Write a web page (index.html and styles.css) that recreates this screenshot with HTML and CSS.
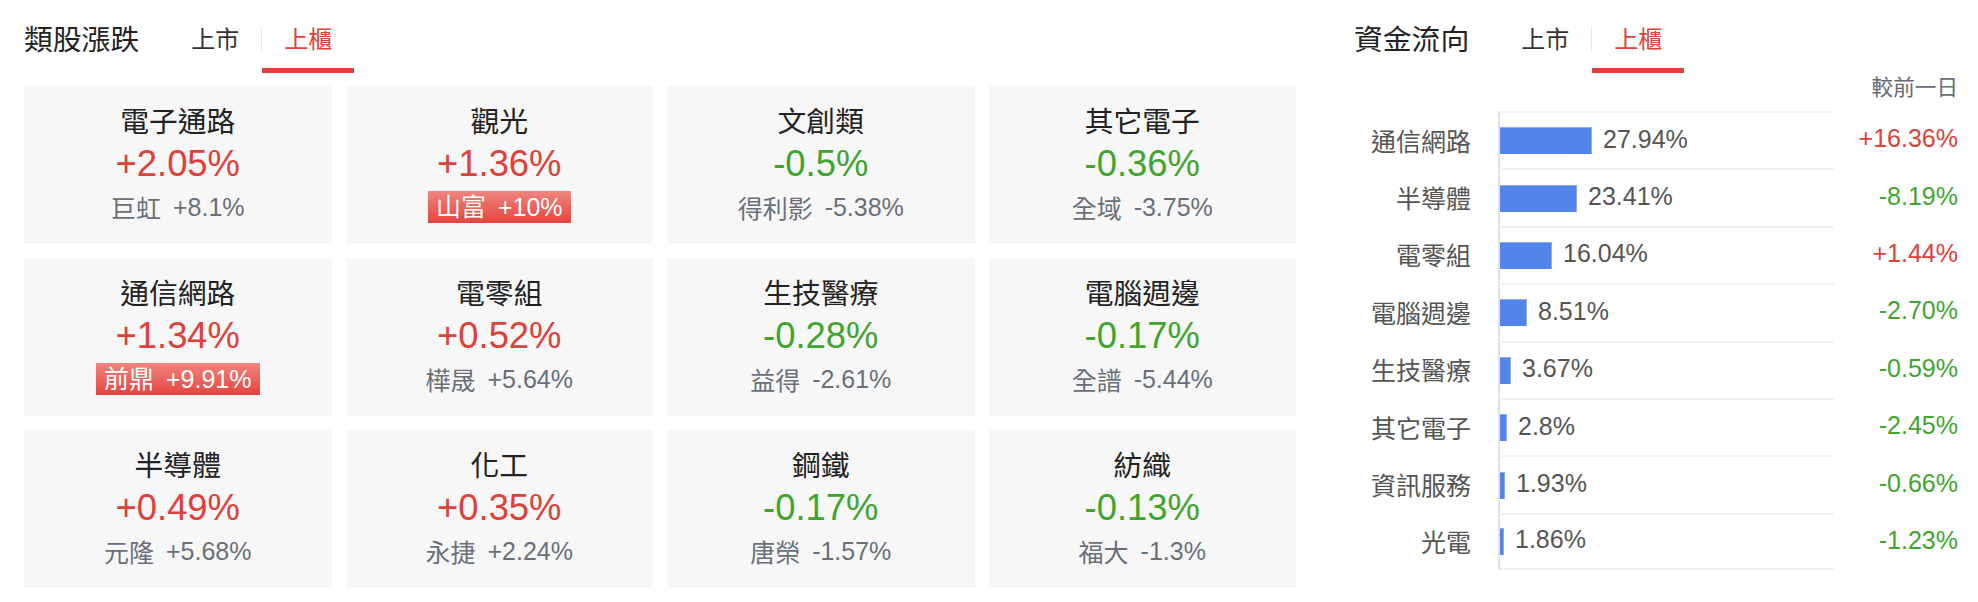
FILE: index.html
```html
<!DOCTYPE html>
<html>
<head>
	<meta charset="utf-8">
	<title>類股漲跌 / 資金流向</title>
	<link rel="stylesheet" href="styles.css">
</head>
<body>
	<div class="page">
		<div class="board">
			<div class="head">
				<h2 class="head_title">類股漲跌</h2>
				<span class="tab">上市</span>
				<span class="tab_sep"></span>
				<span class="tab active">上櫃</span>
			</div>
			<div class="grid">
				<div class="card">
					<div class="name">電子通路</div>
					<div class="pct up">+2.05%</div>
					<div class="lead"><span>巨虹</span><span class="num">+8.1%</span></div>
				</div>
				<div class="card">
					<div class="name">觀光</div>
					<div class="pct up">+1.36%</div>
					<div class="lead"><span class="limit">山富<span class="num">+10%</span></span></div>
				</div>
				<div class="card">
					<div class="name">文創類</div>
					<div class="pct down">-0.5%</div>
					<div class="lead"><span>得利影</span><span class="num">-5.38%</span></div>
				</div>
				<div class="card">
					<div class="name">其它電子</div>
					<div class="pct down">-0.36%</div>
					<div class="lead"><span>全域</span><span class="num">-3.75%</span></div>
				</div>
				<div class="card">
					<div class="name">通信網路</div>
					<div class="pct up">+1.34%</div>
					<div class="lead"><span class="limit">前鼎<span class="num">+9.91%</span></span></div>
				</div>
				<div class="card">
					<div class="name">電零組</div>
					<div class="pct up">+0.52%</div>
					<div class="lead"><span>樺晟</span><span class="num">+5.64%</span></div>
				</div>
				<div class="card">
					<div class="name">生技醫療</div>
					<div class="pct down">-0.28%</div>
					<div class="lead"><span>益得</span><span class="num">-2.61%</span></div>
				</div>
				<div class="card">
					<div class="name">電腦週邊</div>
					<div class="pct down">-0.17%</div>
					<div class="lead"><span>全譜</span><span class="num">-5.44%</span></div>
				</div>
				<div class="card">
					<div class="name">半導體</div>
					<div class="pct up">+0.49%</div>
					<div class="lead"><span>元隆</span><span class="num">+5.68%</span></div>
				</div>
				<div class="card">
					<div class="name">化工</div>
					<div class="pct up">+0.35%</div>
					<div class="lead"><span>永捷</span><span class="num">+2.24%</span></div>
				</div>
				<div class="card">
					<div class="name">鋼鐵</div>
					<div class="pct down">-0.17%</div>
					<div class="lead"><span>唐榮</span><span class="num">-1.57%</span></div>
				</div>
				<div class="card">
					<div class="name">紡織</div>
					<div class="pct down">-0.13%</div>
					<div class="lead"><span>福大</span><span class="num">-1.3%</span></div>
				</div>
			</div>
		</div>

		<div class="flow">
			<div class="head">
				<h2 class="head_title">資金流向</h2>
				<span class="tab">上市</span>
				<span class="tab_sep"></span>
				<span class="tab active">上櫃</span>
			</div>
			<div class="note">較前一日</div>
			<div class="chart">
				<div class="row">
					<div class="label">通信網路</div>
					<div class="track"><span class="bar" style="width:92px"></span><span class="share">27.94%</span></div>
					<div class="diff up">+16.36%</div>
				</div>
				<div class="row">
					<div class="label">半導體</div>
					<div class="track"><span class="bar" style="width:77px"></span><span class="share">23.41%</span></div>
					<div class="diff down">-8.19%</div>
				</div>
				<div class="row">
					<div class="label">電零組</div>
					<div class="track"><span class="bar" style="width:52px"></span><span class="share">16.04%</span></div>
					<div class="diff up">+1.44%</div>
				</div>
				<div class="row">
					<div class="label">電腦週邊</div>
					<div class="track"><span class="bar" style="width:27px"></span><span class="share">8.51%</span></div>
					<div class="diff down">-2.70%</div>
				</div>
				<div class="row">
					<div class="label">生技醫療</div>
					<div class="track"><span class="bar" style="width:11px"></span><span class="share">3.67%</span></div>
					<div class="diff down">-0.59%</div>
				</div>
				<div class="row">
					<div class="label">其它電子</div>
					<div class="track"><span class="bar" style="width:7px"></span><span class="share">2.8%</span></div>
					<div class="diff down">-2.45%</div>
				</div>
				<div class="row">
					<div class="label">資訊服務</div>
					<div class="track"><span class="bar" style="width:5px"></span><span class="share">1.93%</span></div>
					<div class="diff down">-0.66%</div>
				</div>
				<div class="row">
					<div class="label">光電</div>
					<div class="track"><span class="bar" style="width:4px"></span><span class="share">1.86%</span></div>
					<div class="diff down">-1.23%</div>
				</div>
			</div>
		</div>
	</div>
</body>
</html>
```

FILE: styles.css
```css
body,h2,div{margin:0;padding:0;}
body{font-family:"Liberation Sans","Noto Sans CJK TC",sans-serif;color:#222;background:#fff;}

.page{display:flex;gap:58px;padding:0 20px 0 24px;}
.board{width:1272px;}
.flow{flex:1;}

/* 標題 + 上市/上櫃 切換 */
.head{display:flex;align-items:flex-start;height:73px;padding-top:20px;box-sizing:border-box;}
.head_title{font-size:28.8px;font-weight:normal;line-height:40px;margin-right:30px;color:#222;}
.tab{font-size:24px;line-height:40px;padding:0 22px;color:#333;}
.tab.active{color:#e0403a;border-bottom:5px solid #e0403a;padding-bottom:8px;}
.tab_sep{width:1px;height:25px;margin-top:6px;background:#e6e6e6;}

.up{color:#e0403a;}
.down{color:#3fa52f;}

/* 類股卡片 */
.grid{display:grid;grid-template-columns:repeat(4,1fr);gap:14px;margin-top:13px;}
.card{height:158px;background:#f7f7f7;text-align:center;padding-top:16px;box-sizing:border-box;}
.name{font-size:28.8px;line-height:40px;color:#222;}
.pct{font-size:36.4px;line-height:44px;}
.lead{display:flex;justify-content:center;align-items:center;height:42px;font-size:25px;color:#6a7079;}
.lead .num{margin-left:12px;}
.limit{display:inline-block;line-height:32px;padding:0 8px;color:#fff;background:linear-gradient(#f0857f,#e4443d);}

/* 資金流向 */
.note{text-align:right;font-size:21.6px;line-height:30px;color:#666b73;margin-bottom:8px;}
.chart{display:flex;flex-direction:column;}
.row{display:grid;grid-template-columns:144px 336px 1fr;height:57.4px;}
.label{display:flex;align-items:center;justify-content:flex-end;padding-right:27px;font-size:25px;color:#555;}
.track{display:flex;align-items:center;border-top:2px solid #f2f2f2;border-left:2px solid #e2e2e2;}
.row:last-child .track{border-bottom:2px solid #f2f2f2;}
.bar{height:27px;background:#5284e9;box-shadow:inset -1px 0 0 #8eabf0,inset 0 1px 0 #8eabf0;}
.share{margin-left:11px;font-size:25px;color:#555;margin-top:-3px;}
.diff{display:flex;align-items:center;justify-content:flex-end;font-size:25px;margin-top:-2px;}
```
